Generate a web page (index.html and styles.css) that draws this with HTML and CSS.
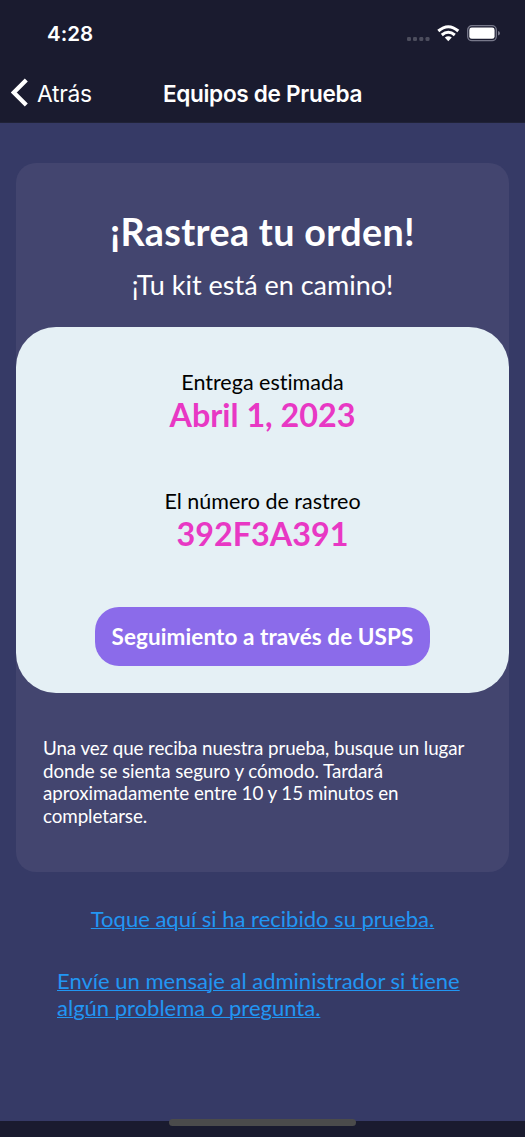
FILE: index.html
```html
<!DOCTYPE html>
<html lang="es">
<head>
<meta charset="utf-8">
<title>Equipos de Prueba</title>
<link rel="stylesheet" href="styles.css">
</head>
<body>
<div class="screen">
  <header class="header">
    <div class="status">
      <span class="time">4:28</span>
      <svg class="status-icons" width="96" height="20" viewBox="0 0 96 20">
        <g fill="#4c4d5d"><rect x="1" y="11" width="4" height="4" rx="1.300"/><rect x="7" y="11" width="4" height="4" rx="1.300"/><rect x="13.300" y="11" width="4" height="4" rx="1.300"/><rect x="19.500" y="11" width="4" height="4" rx="1.300"/></g>
        <g fill="none" stroke="#fff" stroke-width="3"><path d="M32.300 5Q42.300-3.600 52.300 5"/><path d="M35.800 9Q42.300 3.500 48.800 9"/></g>
        <path fill="#fff" d="M38.800 11.600Q42.300 8.800 45.800 11.600L42.300 15.200Z"/>
        <rect x="61.700" y="-.3" width="28.600" height="15" rx="4.200" fill="none" stroke="#77788a" stroke-width="1.300"/>
        <rect x="63.300" y="1.600" width="25.300" height="11.200" rx="2.400" fill="#fff"/>
        <path d="M92 5Q94 5.500 94 7.200T92 9.500Z" fill="#77788a"/>
      </svg>
    </div>
    <nav class="nav">
      <a class="back">
        <svg width="18" height="30" viewBox="0 0 18 30"><path d="M15.300 2 2.800 14.500 15.300 27" fill="none" stroke="#fff" stroke-width="4.200"/></svg>
        <span class="back-label">Atrás</span>
      </a>
      <h1 class="nav-title">Equipos de Prueba</h1>
    </nav>
  </header>
  <main class="content">
    <section class="card">
      <h2 class="title">¡Rastrea tu orden!</h2>
      <p class="subtitle">¡Tu kit está en camino!</p>
      <div class="panel">
        <p class="label">Entrega estimada</p>
        <p class="value">Abril 1, 2023</p>
        <p class="label second">El número de rastreo</p>
        <p class="value">392F3A391</p>
        <button class="button">Seguimiento a través de USPS</button>
      </div>
      <p class="note">Una vez que reciba nuestra prueba, busque un lugar<br>donde se sienta seguro y cómodo. Tardará<br>aproximadamente entre 10 y 15 minutos en<br>completarse.</p>
    </section>
    <a class="link received">Toque aquí si ha recibido su prueba.</a>
    <a class="link message">Envíe un mensaje al administrador si tiene<br>algún problema o pregunta.</a>
  </main>
  <footer class="footer"><div class="home"></div></footer>
</div>
</body>
</html>
```
FILE: styles.css
```css
* { box-sizing: border-box; margin: 0; padding: 0; }
body { width: 525px; height: 1137px; overflow: hidden; background: #363a66; font-family: Lato, sans-serif; font-variant-ligatures: none; color: #fff; }
.screen { display: flex; flex-direction: column; height: 1137px; }
.header { height: 123px; background: #1a1b2f; font-family: Inter, sans-serif; border-bottom: 1px solid #202237; }
.status { display: flex; justify-content: space-between; align-items: flex-start; height: 66px; padding: 22px 23px 0 47px; }
.time { font-size: 20.5px; line-height: 24px; font-weight: 600; }
.status-icons { margin-top: 4px; overflow: visible; }
.nav { display: grid; grid-template-columns: 152px 221px 152px; align-items: center; height: 54px; }
.back { display: flex; align-items: center; gap: 8px; padding-left: 11px; }
.back-label { font-size: 22.8px; letter-spacing: -.3px; white-space: nowrap; }
.nav-title { font-size: 22.6px; letter-spacing: -.32px; font-weight: 600; text-align: center; white-space: nowrap; }
.content { flex: 1; display: flex; flex-direction: column; align-items: center; padding-top: 40px; }
.card { width: 493px; height: 709px; border-radius: 20px; background: #43456f; display: flex; flex-direction: column; align-items: center; padding-top: 46px; }
.title { font-size: 37.7px; letter-spacing: .35px; line-height: 46px; font-weight: 700; white-space: nowrap; }
.subtitle { font-size: 27px; line-height: 32px; margin-top: 14px; white-space: nowrap; }
.panel { width: 493px; height: 366px; margin-top: 26px; padding-top: 42px; border-radius: 40px; background: #e5f0f5; color: #000; display: flex; flex-direction: column; align-items: center; }
.label { font-size: 21.5px; line-height: 26px; white-space: nowrap; }
.value { font-size: 32.3px; line-height: 40px; font-weight: 700; color: #e838c4; white-space: nowrap; }
.second { margin-top: 53px; }
.button { margin-top: 53px; width: 335px; height: 59px; border: 0; border-radius: 24px; background: #8b6bea; color: #fff; font: 700 22.5px Lato, sans-serif; letter-spacing: .09px; white-space: nowrap; }
.note { align-self: flex-start; margin: 44px 0 0 27px; font-size: 18.8px; letter-spacing: -.08px; line-height: 22.7px; white-space: nowrap; }
.link { color: #2296f3; font-size: 22px; line-height: 27px; text-decoration: underline; text-decoration-thickness: 1px; white-space: nowrap; }
.received { margin-top: 33px; }
.message { margin: 35px 0 0 57px; align-self: flex-start; }
.footer { height: 16px; background: #1a1b2f; display: flex; justify-content: center; }
.home { width: 187px; height: 7px; margin-top: -2px; border-radius: 4px; background: #4b4b4b; }
```
